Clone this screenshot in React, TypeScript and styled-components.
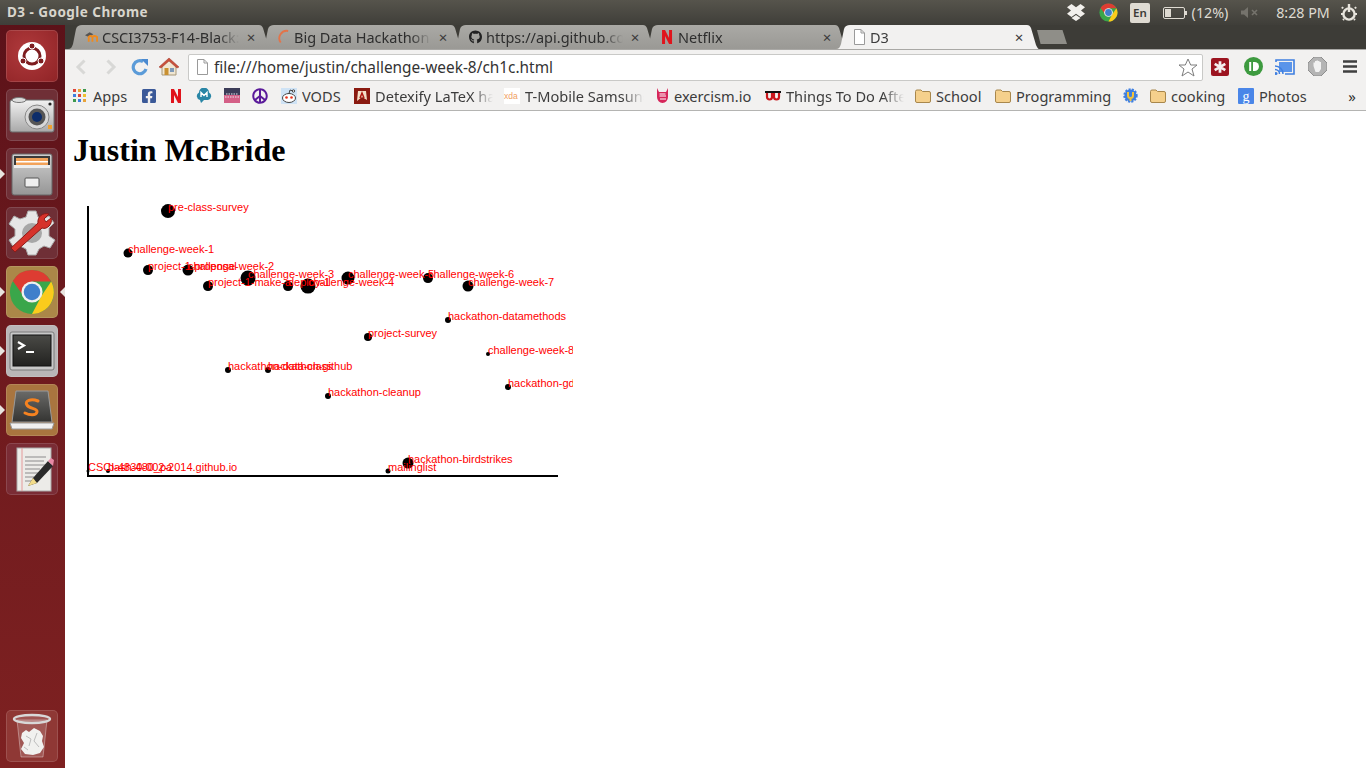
import React from "react";
import styled, { createGlobalStyle } from "styled-components";
import { FaGithub, FaFacebookSquare, FaPeace } from "react-icons/fa";

const UI = `"Noto Sans", "Open Sans", sans-serif`;

const Global = createGlobalStyle`
  html, body { margin: 0; padding: 0; background: #fff; overflow: hidden; }
  #root { height: 768px; }
`;

const Screen = styled.div`
  display: flex; flex-direction: column; height: 768px; width: 1366px; overflow: hidden;
`;

/* ---------- top panel ---------- */
const Panel = styled.header`
  height: 25px; flex: none; display: flex; align-items: center; justify-content: space-between;
  background: linear-gradient(#56544c, #3f3e39);
  padding-left: 7px;
  color: #dfdbd2; font-family: ${UI};
`;
const WindowTitle = styled.div`font-size: 13.5px; font-weight: 700; letter-spacing: .47px; color: #d8d5cc; padding-bottom: 2px;`;
const Indicators = styled.div`display: flex; align-items: center; height: 25px;`;
const Indicator = styled.div<{ $w: number }>`
  width: ${p => p.$w}px; display: flex; align-items: center; justify-content: center; flex: none; height: 25px;
`;
const LangBox = styled.div`
  width: 20px; height: 20px; border-radius: 2px; background: #dfdbd2; color: #3c3b37;
  font-size: 11.5px; font-weight: 600; display: flex; align-items: center; justify-content: center;
`;
const PanelText = styled.span`font-size: 14.3px; color: #dfdbd2; white-space: nowrap;`;

/* ---------- launcher ---------- */
const Body = styled.div`display: flex; flex: 1; min-height: 0;`;
const Launcher = styled.nav`
  width: 65px; flex: none; display: flex; flex-direction: column; gap: 7px;
  padding: 5px 0 6px 6px; box-sizing: border-box;
  background: linear-gradient(#5c1219, #6e1a1e 45%, #7e2121);
`;
const Tile = styled.div<{ $bg: string }>`
  position: relative; width: 52px; height: 52px; border-radius: 5px; flex: none;
  background: ${p => p.$bg};
  box-shadow: inset 0 0 0 1px rgba(255,255,255,.13);
  display: flex; align-items: center; justify-content: center;
`;
const TrashTile = styled(Tile)`margin-top: auto;`;
const PipLeft = styled.i`
  position: absolute; left: -6px; top: 21px; width: 0; height: 0;
  border-left: 5px solid #e8e4df; border-top: 5px solid transparent; border-bottom: 5px solid transparent;
`;
const PipRight = styled.i`
  position: absolute; right: -7px; top: 21px; width: 0; height: 0;
  border-right: 5px solid #e8e4df; border-top: 5px solid transparent; border-bottom: 5px solid transparent;
`;

/* ---------- browser chrome ---------- */
const Browser = styled.main`flex: 1; min-width: 0; display: flex; flex-direction: column; font-family: ${UI};`;
const TabStrip = styled.div`
  height: 24px; flex: none; display: flex; align-items: flex-start; padding-left: 3px; background: #3d3c37;
`;
const Tab = styled.div<{ $active?: boolean; $order: number }>`
  position: relative; z-index: ${p => (p.$active ? 9 : p.$order)};
  width: 203px; height: 24px; flex: none; margin-right: -11px; box-sizing: border-box;
  padding-left: 17px; display: flex; align-items: center;
  clip-path: path("M0 24 C3 24 4 22 5 19 L8 4 C9 1 11 0 14 0 L191 0 C193 0 194 1 195 3 L200 20 C201 22 202 24 203 24 Z");
  background: ${p => (p.$active ? "#f2f1f0" : "linear-gradient(#aaa9a5, #9a9995)")};
  color: ${p => (p.$active ? "#3c3c3c" : "#2e2e2e")};
  font-size: 14.5px;
  padding-bottom: 1px;
`;
const TabIcon = styled.span`width: 13px; height: 16px; flex: none; margin-right: 4px; display: flex; align-items: center; justify-content: center; overflow: visible;`;
const TabTitle = styled.span`
  width: 137px; flex: none; overflow: hidden; white-space: nowrap;
  mask-image: linear-gradient(90deg, #000 85%, transparent);
`;
const TabClose = styled.span`
  width: 14px; margin-left: 5px; flex: none; text-align: center; font-size: 15px; line-height: 16px; color: #3a3a3a;
`;
const NewTab = styled.div`
  width: 30px; height: 14px; flex: none; margin: 5px 0 0 9px; background: #8f8e88;
  clip-path: polygon(0 0, 85% 0, 100% 100%, 12% 100%);
`;

const Toolbar = styled.div`
  height: 33px; flex: none; box-sizing: border-box; display: flex; align-items: center;
  background: #f2f1f0; border-top: 1px solid #a9a8a5; padding: 1px 0 0 6px;
`;
const ToolButton = styled.div<{ $w: number }>`
  width: ${p => p.$w}px; height: 28px; flex: none; display: flex; align-items: center; justify-content: center;
`;
const Omnibox = styled.div`
  width: 1015px; height: 27px; flex: none; box-sizing: border-box; margin-top: 1px;
  background: #fff; border: 1px solid #c9c9c7; border-radius: 2px;
  display: flex; align-items: center; padding: 0 4px 0 7px;
`;
const Url = styled.div`flex: 1; margin-left: 5px; font-size: 15.4px; color: #333; white-space: nowrap;`;

const Bookmarks = styled.div`
  height: 29px; flex: none; box-sizing: border-box; display: flex; align-items: center;
  background: #f2f1f0; border-bottom: 1px solid #b4b4b2; padding: 0 0 1px 8px; color: #3c3c3c; font-size: 14.6px;
`;
const Bookmark = styled.div<{ $w?: number }>`
  display: flex; align-items: center; flex: none; width: ${p => (p.$w ? p.$w + "px" : "auto")};
`;
const MarkIcon = styled.span<{ $w: number }>`
  width: ${p => p.$w}px; height: 16px; flex: none; display: flex; align-items: center; justify-content: center;
`;
const MarkText = styled.span<{ $w: number; $fade?: boolean; $gap?: number }>`
  width: ${p => p.$w}px; margin-left: ${p => p.$gap ?? 5}px; flex: none; overflow: hidden; white-space: nowrap;
  ${p => (p.$fade ? "mask-image: linear-gradient(90deg, #000 82%, transparent);" : "")}
`;
const Chevrons = styled.span`margin-left: auto; margin-right: 10px; font-size: 15px; color: #333;`;

/* ---------- page ---------- */
const Page = styled.section`flex: 1; background: #fff; padding: 0 8px; min-height: 0; overflow: hidden;`;
const Heading = styled.h1`
  font-family: "Liberation Serif", "Times New Roman", serif; font-size: 32px; font-weight: 700;
  color: #000; margin: 21.44px 0;
`;
const Chart = styled.svg`display: block; width: 500px; height: 300px; overflow: hidden;`;
const Dot = styled.circle`fill: #000;`;
const Axis = styled.line`stroke: #000; stroke-width: 2;`;
const Label = styled.text`fill: #f00; font: 11px "Liberation Sans", Arial, sans-serif;`;

const nodes: [string, number, number, number][] = [
  ["pre-class-survey", 168, 211, 7],
  ["challenge-week-1", 128, 253, 4.5],
  ["project-1-proposal", 148, 270, 5],
  ["challenge-week-2", 188, 270, 5.5],
  ["challenge-week-3", 248, 278, 7.5],
  ["project-1-make-a", 208, 286, 5],
  ["deploy-1", 288, 286, 5],
  ["challenge-week-4", 308, 286, 7.5],
  ["challenge-week-5", 348, 278, 6.5],
  ["challenge-week-6", 428, 278, 5],
  ["challenge-week-7", 468, 286, 5.5],
  ["hackathon-datamethods", 448, 320, 3],
  ["project-survey", 368, 337, 4],
  ["challenge-week-8", 488, 354, 2],
  ["hackathon-data-class", 228, 370, 3],
  ["hackathon-github", 268, 370, 3],
  ["hackathon-gdelt", 508, 387, 3],
  ["hackathon-cleanup", 328, 396, 3],
  ["hackathon-birdstrikes", 408, 463, 5.5],
  ["mailinglist", 388, 471, 2.5],
  ["CSCI-4830-002-2014.github.io", 88, 471, 1.5],
  ["bash-480_pa", 108, 471, 2],
];

/* ---------- icons ---------- */
const ChromeLogo = ({ s }: { s: number }) => (
  <svg width={s} height={s} viewBox="0 0 48 48">
    <circle cx="24" cy="24" r="23" fill="#3aa64a" />
    <path d="M44 13 A23 23 0 0 1 24 47 L34 28 Z" fill="#fbcb1c" />
    <path d="M4 12.5 A23 23 0 0 1 44 13 L24 13 L15 28 Z" fill="#dd3c32" />
    <circle cx="24" cy="24" r="11" fill="#f1f1ee" />
    <circle cx="24" cy="24" r="8.6" fill="#3f7fcb" />
  </svg>
);
const Folder = () => (
  <svg width="16" height="14" viewBox="0 0 16 14">
    <path d="M.5 2.5Q.5 1 2 1H6L7.5 2.5H14Q15.5 2.5 15.5 4V12Q15.5 13.5 14 13.5H2Q.5 13.5.5 12Z" fill="#f5d08c" stroke="#a8874c" />
  </svg>
);
const PageGlyph = ({ w = 13, h = 16 }: { w?: number; h?: number }) => (
  <svg width={w} height={h} viewBox="0 0 13 16">
    <path d="M1.5.5H8L11.5 4V15.5H1.5Z M8 .5V4H11.5" fill="#fff" stroke="#9a9a9a" />
  </svg>
);
const NetflixN = ({ h = 14 }: { h?: number }) => (
  <svg width={h * 0.72} height={h} viewBox="0 0 10 14">
    <path d="M0 0H3L7 8V0H10V14H7L3 6V14H0Z" fill="#e0141c" />
  </svg>
);

const Ubuntu = () => (
  <svg width="32" height="32" viewBox="0 0 32 32">
    <circle cx="16" cy="16" r="14" fill="#fff" />
    <circle cx="16" cy="16" r="8" fill="none" stroke="#7d1d20" strokeWidth="3" />
    <circle cx="16" cy="6" r="3" fill="#7d1d20" stroke="#fff" />
    <circle cx="7" cy="21" r="3" fill="#7d1d20" stroke="#fff" />
    <circle cx="25" cy="21" r="3" fill="#7d1d20" stroke="#fff" />
  </svg>
);
const Camera = () => (
  <svg width="46" height="38" viewBox="0 0 46 38">
    <defs><linearGradient id="cam" x1="0" y1="0" x2="0" y2="1"><stop offset="0" stopColor="#f2f2f2" /><stop offset="1" stopColor="#a9a9a9" /></linearGradient></defs>
    <rect x="1" y="4" width="44" height="32" rx="2" fill="url(#cam)" stroke="#6d6d6d" />
    <ellipse cx="10" cy="4" rx="7" ry="2.5" fill="#ddd" stroke="#777" />
    <circle cx="28" cy="21" r="12" fill="#d8d8d8" stroke="#888" />
    <circle cx="28" cy="21" r="8.5" fill="#555" />
    <circle cx="28" cy="21" r="5" fill="#0d2d6a" />
    <circle cx="41" cy="8" r="1.6" fill="#222" />
    <rect x="39" y="29" width="4" height="4" fill="#f0a030" />
  </svg>
);
const Cabinet = () => (
  <svg width="42" height="44" viewBox="0 0 42 44">
    <defs><linearGradient id="cab" x1="0" y1="0" x2="0" y2="1"><stop offset="0" stopColor="#cfcfcf" /><stop offset="1" stopColor="#969696" /></linearGradient></defs>
    <rect x="1" y="2" width="40" height="41" rx="2" fill="url(#cab)" stroke="#666" />
    <rect x="3" y="4" width="36" height="9" fill="#3a3a3a" />
    <rect x="5" y="6" width="32" height="7" fill="#f2a25a" />
    <rect x="5" y="9" width="32" height="1.5" fill="#fff" />
    <rect x="3" y="13" width="36" height="3" fill="#eee" />
    <rect x="14" y="26" width="14" height="9" rx="1" fill="#eee" stroke="#555" />
  </svg>
);
const Tools = () => (
  <svg width="48" height="48" viewBox="0 0 48 48">
    <path d="M20 2H28L30 8L35 10L41 7L46 14L41 19V27L47 31L42 39L36 37L31 40L28 46H20L18 40L12 37L6 39L1 31L7 27V20L1 15L6 7L12 10L18 8Z" fill="#e6e6e6" stroke="#aaa" />
    <circle cx="24" cy="24" r="10" fill="#a7a7a7" />
    <path d="M7 43L3 39L30 14C29 8 35 3 41 5L36 10L38 13L43 9C45 15 39 21 34 19Z" fill="#d6322b" stroke="#8c1a17" />
  </svg>
);
const Terminal = () => (
  <svg width="46" height="40" viewBox="0 0 46 40">
    <defs><linearGradient id="term" x1="0" y1="0" x2="0" y2="1"><stop offset="0" stopColor="#4a4a46" /><stop offset="1" stopColor="#222220" /></linearGradient></defs>
    <rect x="1" y="1" width="44" height="38" rx="2" fill="#c8c8c8" stroke="#7a7a7a" />
    <rect x="4" y="4" width="38" height="31" fill="url(#term)" stroke="#111" />
    <path d="M9 11L15 14.5L9 18" fill="none" stroke="#fff" strokeWidth="2.2" />
    <rect x="17" y="20" width="8" height="2" fill="#fff" />
  </svg>
);
const Sublime = () => (
  <svg width="46" height="42" viewBox="0 0 46 42">
    <defs><linearGradient id="subl" x1="0" y1="0" x2="0" y2="1"><stop offset="0" stopColor="#6a6a68" /><stop offset="1" stopColor="#343432" /></linearGradient></defs>
    <path d="M7 2H39L43 33H3Z" fill="url(#subl)" stroke="#999" />
    <path d="M1 34H45L43 40H3Z" fill="#f0f0f0" stroke="#999" />
    <path d="M29 12C22 9 15 12 18 16C20 20 29 19 28 23C27 27 20 26 16 24" fill="none" stroke="#f58220" strokeWidth="3" strokeLinecap="round" />
  </svg>
);
const Editor = () => (
  <svg width="44" height="48" viewBox="0 0 44 48">
    <rect x="7" y="3" width="34" height="43" fill="#ecebe8" stroke="#aaa" />
    <path d="M12 3V46" stroke="#e59a9a" />
    <path d="M15 12H36M15 16H34M15 20H36M15 24H30M15 28H28M15 32H24M15 36H22" stroke="#8b8b8b" strokeWidth="1.1" />
    <path d="M18 41L23 33L38 16L43 21L27 38Z" fill="#2a2a2a" />
    <path d="M38 16L41 13L44 15L43 21Z" fill="#e88aa5" />
    <path d="M18 41L23 33L27 38Z" fill="#f3dc8a" />
  </svg>
);
const Trash = () => (
  <svg width="40" height="46" viewBox="0 0 40 46">
    <path d="M5 7L9 44H31L35 7Z" fill="rgba(255,255,255,.16)" stroke="rgba(255,255,255,.35)" />
    <ellipse cx="20" cy="6" rx="18" ry="4" fill="rgba(255,255,255,.15)" stroke="#d8d8d8" strokeWidth="2.4" />
    <path d="M10 20L14 17L17 19L22 15L28 18L31 23L30 28L32 34L28 40L21 42L13 41L9 36L12 30L9 25Z" fill="#f1f1ef" />
    <path d="M14 23L19 26L17 33M25 20L22 28L27 34M12 34L16 37" stroke="#bdbdbd" fill="none" />
  </svg>
);

const tabs: { title: string; icon: React.ReactNode; active?: boolean }[] = [
  {
    title: "CSCI3753-F14-Black:",
    icon: (
      <svg width="14" height="12" viewBox="0 0 14 12">
        <path d="M0 4L5 1L9 3L4 6Z" fill="#555" />
        <path d="M4 11V6Q6 4 8 6V11M8 11V6Q10 4 13 6V11" fill="none" stroke="#f08a1c" strokeWidth="2" />
      </svg>
    ),
  },
  {
    title: "Big Data Hackathon",
    icon: (
      <svg width="14" height="16" viewBox="0 0 14 16">
        <path d="M12 1.5A8 8 0 0 0 4 14" fill="none" stroke="#e2744a" strokeWidth="2" />
      </svg>
    ),
  },
  { title: "https://api.github.com", icon: <FaGithub size={16} color="#222" /> },
  { title: "Netflix", icon: <NetflixN /> },
  { title: "D3", icon: <PageGlyph />, active: true },
];

const tiles = [
  { bg: "radial-gradient(circle at 40% 40%, #b03a3c, #8f2326)", el: <Ubuntu /> },
  { bg: "#6f2f36", el: <Camera /> },
  { bg: "#6f2f36", el: <Cabinet />, left: true },
  { bg: "#6f2f36", el: <Tools /> },
  { bg: "#ab8748", el: <ChromeLogo s={46} />, left: true, right: true },
  { bg: "#b9b6b7", el: <Terminal />, left: true },
  { bg: "#a9753f", el: <Sublime />, left: true },
  { bg: "#7a2c35", el: <Editor /> },
];

const App = () => (
  <Screen>
    <Global />
    <Panel>
      <WindowTitle>D3 - Google Chrome</WindowTitle>
      <Indicators>
        <Indicator $w={32}>
          <svg width="18" height="17" viewBox="0 0 18 17">
            <path d="M4.5 0L9 3.2L13.5 0L18 3.2L14 6.5L18 9.7L13.5 13L9 9.8L4.5 13L0 9.7L4 6.5L0 3.2ZM4.5 14L9 11L13.5 14L9 17Z" fill="#f2f0ec" />
          </svg>
        </Indicator>
        <Indicator $w={32}><ChromeLogo s={19} /></Indicator>
        <Indicator $w={32}><LangBox>En</LangBox></Indicator>
        <Indicator $w={38}>
          <svg width="24" height="12" viewBox="0 0 24 12">
            <rect x=".5" y=".5" width="21" height="11" rx="1.5" fill="none" stroke="#dfdbd2" />
            <rect x="2" y="2" width="6" height="8" fill="#dfdbd2" />
            <rect x="22" y="4" width="2" height="4" fill="#dfdbd2" />
          </svg>
        </Indicator>
        <Indicator $w={32}><PanelText>(12%)</PanelText></Indicator>
        <Indicator $w={48}>
          <svg width="18" height="11" viewBox="0 0 18 11">
            <path d="M0 3.5H3L7 0V11L3 7.5H0Z" fill="#75736c" />
            <path d="M11 3L16 8M16 3L11 8" stroke="#75736c" strokeWidth="1.6" />
          </svg>
        </Indicator>
        <Indicator $w={58}><PanelText>8:28 PM</PanelText></Indicator>
        <Indicator $w={34}>
          <svg width="16" height="18" viewBox="0 0 16 18">
            <circle cx="8" cy="10" r="5.6" fill="none" stroke="#e8e5dd" strokeWidth="2.4" />
            <path d="M8 0V8" stroke="#e8e5dd" strokeWidth="2.4" />
            <path d="M2 3L1 4.5M14 3L15 4.5M0 10H2M14 10H16M2 16L3 15M14 16L13 15" stroke="#e8e5dd" strokeWidth="2" />
          </svg>
        </Indicator>
      </Indicators>
    </Panel>
    <Body>
      <Launcher>
        {tiles.map((t, i) => (
          <Tile key={i} $bg={t.bg}>
            {t.left && <PipLeft />}
            {t.el}
            {t.right && <PipRight />}
          </Tile>
        ))}
        <TrashTile $bg="#8f3835"><Trash /></TrashTile>
      </Launcher>
      <Browser>
        <TabStrip>
          {tabs.map((t, i) => (
            <Tab key={t.title} $active={t.active} $order={tabs.length - i}>
              <TabIcon>{t.icon}</TabIcon>
              <TabTitle>{t.title}</TabTitle>
              <TabClose>×</TabClose>
            </Tab>
          ))}
          <NewTab />
        </TabStrip>
        <Toolbar>
          <ToolButton $w={20}>
            <svg width="12" height="16" viewBox="0 0 12 16"><path d="M9.5 1.5L3 8L9.5 14.5" fill="none" stroke="#d8d8d6" strokeWidth="3" /></svg>
          </ToolButton>
          <ToolButton $w={40}>
            <svg width="12" height="16" viewBox="0 0 12 16"><path d="M2.5 1.5L9 8L2.5 14.5" fill="none" stroke="#d8d8d6" strokeWidth="3" /></svg>
          </ToolButton>
          <ToolButton $w={18}>
            <svg width="18" height="18" viewBox="0 0 18 18">
              <path d="M15 11A6.5 6.5 0 1 1 12 3.6" fill="none" stroke="#5b9bd8" strokeWidth="3.2" />
              <path d="M10 1H17V8Z" fill="#4a8ad0" />
            </svg>
          </ToolButton>
          <ToolButton $w={39}>
            <svg width="20" height="19" viewBox="0 0 20 19">
              <path d="M3 9V18H17V9L10 3Z" fill="#f0e6d2" stroke="#a89878" />
              <rect x="11" y="11" width="4" height="4" fill="#7d99b8" />
              <rect x="5.5" y="11" width="4" height="7" fill="#c99030" />
              <path d="M0 10L10 1L20 10L18 11L10 4L2 11Z" fill="#c9503c" stroke="#9e3426" strokeWidth=".5" />
            </svg>
          </ToolButton>
          <Omnibox>
            <PageGlyph />
            <Url>file:///home/justin/challenge-week-8/ch1c.html</Url>
            <svg width="20" height="19" viewBox="0 0 20 19">
              <path d="M10 1L12.7 7H19L14 11L16 18L10 14L4 18L6 11L1 7H7.3Z" fill="#fff" stroke="#7d7d7d" />
            </svg>
          </Omnibox>
          <ToolButton $w={34}>
            <svg width="18" height="18" viewBox="0 0 17 17">
              <rect width="17" height="17" rx="2" fill="#9c1420" />
              <path d="M8.5 3V14M3.5 5.5L13.5 11.5M13.5 5.5L3.5 11.5" stroke="#f4eeee" strokeWidth="2.6" />
            </svg>
          </ToolButton>
          <ToolButton $w={33}>
            <svg width="19" height="19" viewBox="0 0 19 19">
              <circle cx="9.5" cy="9.5" r="9.5" fill="#3d9a3f" />
              <rect x="5.2" y="5" width="2" height="9" fill="#fff" />
              <path d="M9 5H10.5A4.5 4.5 0 0 1 10.5 14H9Z" fill="#fff" />
            </svg>
          </ToolButton>
          <ToolButton $w={30}>
            <svg width="20" height="16" viewBox="0 0 20 16">
              <path d="M1 3V1H19V15H10" fill="none" stroke="#3f7fe0" strokeWidth="1.6" />
              <rect x="4" y="3" width="13" height="10" fill="#5a94ea" />
              <path d="M0 7A8 8 0 0 1 8 15M0 10.5A4.5 4.5 0 0 1 4.5 15" fill="none" stroke="#3f7fe0" strokeWidth="1.5" />
              <circle cx="1" cy="14.5" r="1.5" fill="#3f7fe0" />
            </svg>
          </ToolButton>
          <ToolButton $w={34}>
            <svg width="19" height="19" viewBox="0 0 19 19">
              <path d="M6 0H13L19 6V13L13 19H6L0 13V6Z" fill="#b4b4b4" stroke="#8e8e8e" />
              <path d="M5.5 9V5.5H7V4H8.5V3.5H10V4H11.5V5H13V12L11 15H7.5Z" fill="#f1f1f1" />
            </svg>
          </ToolButton>
          <ToolButton $w={32}>
            <svg width="14" height="13" viewBox="0 0 14 13"><path d="M0 1.5H14M0 6.5H14M0 11.5H14" stroke="#3f3f3f" strokeWidth="2.6" /></svg>
          </ToolButton>
        </Toolbar>
        <Bookmarks>
          <Bookmark $w={68}>
            <MarkIcon $w={13}>
              <svg width="13" height="13" viewBox="0 0 13 13">
                {[["#e0453a", "#e8a33a", "#3d9a4f"], ["#3f7fe0", "#e0453a", "#f0c030"], ["#3d9a4f", "#3f7fe0", "#e8a33a"]].map((r, y) =>
                  r.map((c, x) => <rect key={`${x}${y}`} x={x * 5} y={y * 5} width="3" height="3" fill={c} />),
                )}
              </svg>
            </MarkIcon>
            <MarkText $w={40} $gap={7}>Apps</MarkText>
          </Bookmark>
          <Bookmark $w={30}><MarkIcon $w={16}><FaFacebookSquare size={16} color="#3b5998" /></MarkIcon></Bookmark>
          <Bookmark $w={25}><MarkIcon $w={10}><NetflixN /></MarkIcon></Bookmark>
          <Bookmark $w={28}>
            <MarkIcon $w={16}>
              <svg width="16" height="15" viewBox="0 0 16 15">
                <path d="M4 12A4 4 0 0 1 3 4.5A5 5 0 0 1 13 4.5A4 4 0 0 1 12 12H8L5 15Z" fill="#2a86a6" />
                <path d="M5 9V4.5L8 7.5L11 4.5V9" fill="none" stroke="#fff" strokeWidth="1.4" />
              </svg>
            </MarkIcon>
          </Bookmark>
          <Bookmark $w={28}>
            <MarkIcon $w={16}>
              <svg width="16" height="15" viewBox="0 0 16 15">
                <rect width="16" height="7" fill="#3c3c58" /><rect y="7" width="16" height="8" fill="#d45f86" />
                <path d="M2 6H14M1 9H15" stroke="#e8e8f0" strokeDasharray="1.5 1" />
              </svg>
            </MarkIcon>
          </Bookmark>
          <Bookmark $w={29}><MarkIcon $w={16}><FaPeace size={16} color="#5a1a9a" /></MarkIcon></Bookmark>
          <Bookmark $w={73}>
            <MarkIcon $w={16}>
              <svg width="16" height="16" viewBox="0 0 16 16">
                <rect width="16" height="16" fill="#cfe3f5" />
                <ellipse cx="8" cy="10" rx="6.5" ry="4.5" fill="#fff" stroke="#444" />
                <circle cx="5.5" cy="9.5" r="1.3" fill="#e8341c" />
                <circle cx="10.5" cy="9.5" r="1.3" fill="#e8341c" />
                <path d="M8 5.5L9 2L12 3" fill="none" stroke="#444" />
                <circle cx="12.5" cy="3" r="1.2" fill="#fff" stroke="#444" />
              </svg>
            </MarkIcon>
            <MarkText $w={46}>VODS</MarkText>
          </Bookmark>
          <Bookmark $w={150}>
            <MarkIcon $w={16}>
              <svg width="16" height="16" viewBox="0 0 16 16">
                <rect width="16" height="16" fill="#8a1a10" />
                <path d="M4 3H12L13 12L8 9L3 13Z" fill="#f4e0c8" /><path d="M6 10L8 5L10 10" stroke="#b01810" strokeWidth="1.5" fill="none" />
              </svg>
            </MarkIcon>
            <MarkText $w={118} $fade>Detexify LaTeX handwritten</MarkText>
          </Bookmark>
          <Bookmark $w={151}>
            <MarkIcon $w={16}>
              <svg width="16" height="16" viewBox="0 0 16 16">
                <rect width="16" height="16" fill="#fff" />
                <text x="0" y="11" fontFamily="Liberation Sans" fontSize="8.5" fill="#f0a060">xda</text>
              </svg>
            </MarkIcon>
            <MarkText $w={119} $fade>T-Mobile Samsung Galaxy</MarkText>
          </Bookmark>
          <Bookmark $w={110}>
            <MarkIcon $w={14}>
              <svg width="13" height="16" viewBox="0 0 13 16">
                <path d="M1 0L3 4H10L12 0V9A5.5 6 0 0 1 1 9Z" fill="#d6265a" />
                <path d="M3.5 8H10M3.5 6H9.5M4 11H10" stroke="#fff" strokeWidth="1.2" />
              </svg>
            </MarkIcon>
            <MarkText $w={80}>exercism.io</MarkText>
          </Bookmark>
          <Bookmark $w={150}>
            <MarkIcon $w={16}>
              <svg width="16" height="13" viewBox="0 0 16 13">
                <path d="M0 3H16" stroke="#111" strokeWidth="2" />
                <path d="M2 4V8A2.5 2.5 0 0 0 7 8V4M9 4V8A2.5 2.5 0 0 0 14 8V4" fill="none" stroke="#c9161c" strokeWidth="2.2" />
              </svg>
            </MarkIcon>
            <MarkText $w={118} $fade>Things To Do After Installing</MarkText>
          </Bookmark>
          <Bookmark $w={80}><MarkIcon $w={16}><Folder /></MarkIcon><MarkText $w={50}>School</MarkText></Bookmark>
          <Bookmark $w={128}><MarkIcon $w={16}><Folder /></MarkIcon><MarkText $w={100}>Programming</MarkText></Bookmark>
          <Bookmark $w={27}>
            <MarkIcon $w={15}>
              <svg width="15" height="15" viewBox="0 0 15 15">
                <circle cx="7.5" cy="7.5" r="6" fill="#3f7fe0" stroke="#3f7fe0" strokeWidth="2.4" strokeDasharray="2 1.2" />
                <path d="M5 4V7.5A2.5 2.5 0 0 0 10 7.5V4M7.5 9V13" stroke="#f3c33a" strokeWidth="2" fill="none" />
              </svg>
            </MarkIcon>
          </Bookmark>
          <Bookmark $w={88}><MarkIcon $w={16}><Folder /></MarkIcon><MarkText $w={60}>cooking</MarkText></Bookmark>
          <Bookmark>
            <MarkIcon $w={16}>
              <svg width="16" height="16" viewBox="0 0 16 16">
                <rect width="16" height="16" rx="1" fill="#4a86e8" />
                <text x="8" y="13" textAnchor="middle" fontFamily="Liberation Serif" fontSize="14" fill="#fff">g</text>
              </svg>
            </MarkIcon>
            <MarkText $w={52}>Photos</MarkText>
          </Bookmark>
          <Chevrons>»</Chevrons>
        </Bookmarks>
        <Page>
          <Heading>Justin McBride</Heading>
          <Chart viewBox="73 190.88 500 300">
            <Axis x1="88" y1="206" x2="88" y2="476" />
            <Axis x1="87" y1="476" x2="558" y2="476" />
            {nodes.map(([, x, y, r]) => <Dot key={`${x}-${y}`} cx={x} cy={y} r={r} />)}
            {nodes.map(([name, x, y]) => <Label key={name} x={x} y={y}>{name}</Label>)}
          </Chart>
        </Page>
      </Browser>
    </Body>
  </Screen>
);

export default App;
